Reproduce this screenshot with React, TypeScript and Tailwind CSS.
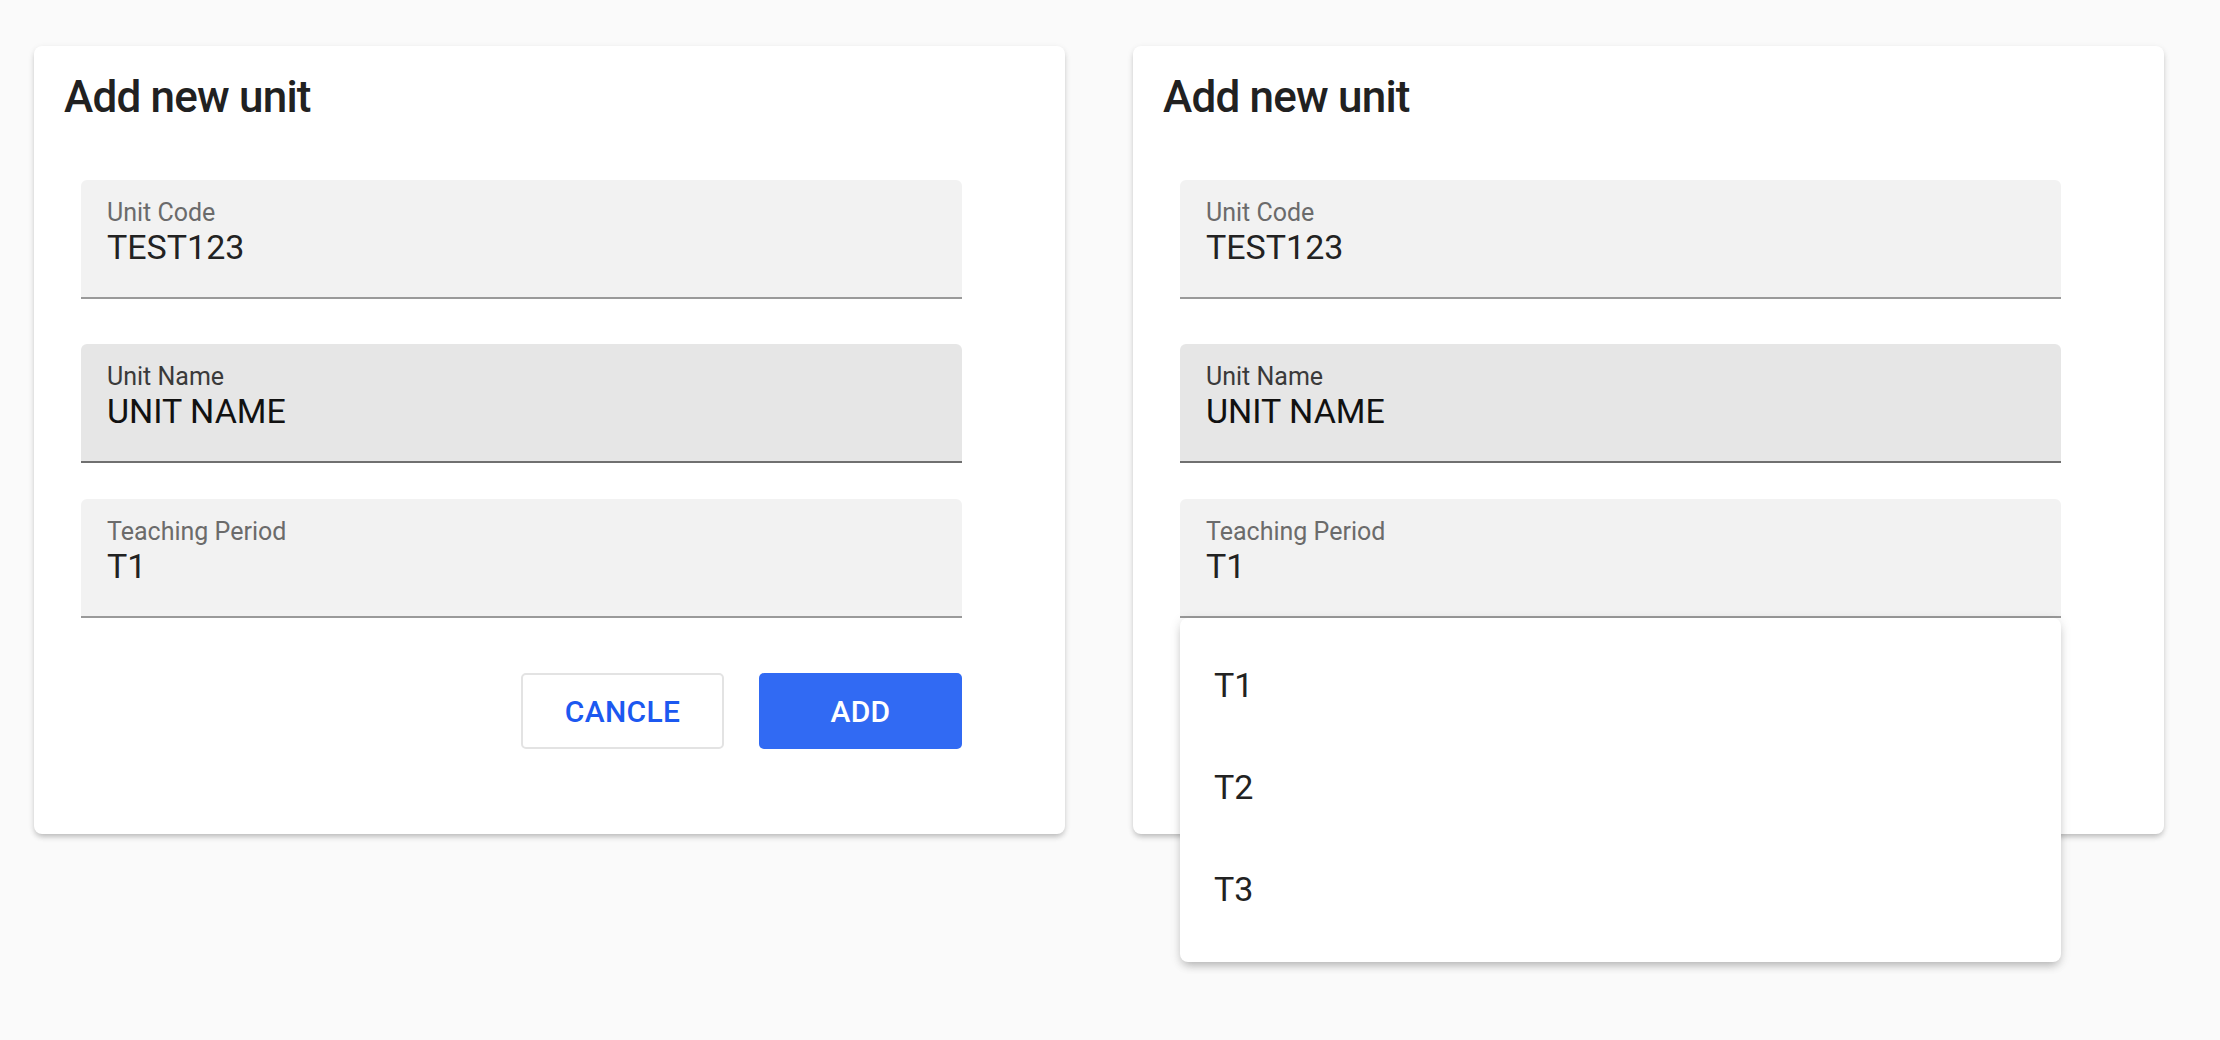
import React from "react";

type FieldProps = {
  label: string;
  value: string;
  hovered?: boolean;
  className?: string;
  children?: React.ReactNode;
};

function Field({ label, value, hovered, className, children }: FieldProps) {
  return (
    <div className={"relative w-[881px] " + (className ?? "")}>
      <div
        className={
          "rounded-t-[6px] border-b-2 pl-[26px] pt-[18px] pb-[29px] " +
          (hovered ? "bg-[#e6e6e6] border-[#707070]" : "bg-[#f2f2f2] border-[#9a9a9a]")
        }
      >
        <div
          className={
            "text-[25px] leading-[29px] " + (hovered ? "text-[#3a3a3a]" : "text-[#6b6b6b]")
          }
        >
          {label}
        </div>
        <div
          className={
            "text-[34px] leading-[41px] " + (hovered ? "text-[#111111]" : "text-[#222222]")
          }
        >
          {value}
        </div>
      </div>
      {children}
    </div>
  );
}

function Card({ withMenu }: { withMenu?: boolean }) {
  return (
    <div className="relative flex h-[788px] w-[1031px] flex-col rounded-[8px] bg-white px-[30px] pt-[25px] shadow-[0_4px_6px_-2px_rgba(0,0,0,0.22),0_2px_6px_0_rgba(0,0,0,0.1)]">
      <h2 className="text-[44px] font-medium leading-[52px] tracking-[-0.018em] text-[#212121]">
        Add new unit
      </h2>
      <div className="ml-[17px] mt-[57px] flex flex-col">
        <Field label="Unit Code" value="TEST123" />
        <Field label="Unit Name" value="UNIT NAME" hovered className="mt-[45px]" />
        <Field label="Teaching Period" value="T1" className="mt-[36px] z-10">
          {withMenu && (
            <div className="absolute left-0 right-0 top-full h-[344px] rounded-[8px] bg-white pt-[16px] pb-[22px] shadow-[0_6px_10px_-3px_rgba(0,0,0,0.22),0_2px_12px_0_rgba(0,0,0,0.12)]">
              {["T1", "T2", "T3"].map((t) => (
                <div
                  key={t}
                  className="flex h-[102px] items-center pl-[34px] text-[34px] text-[#222222]"
                >
                  {t}
                </div>
              ))}
            </div>
          )}
        </Field>
        <div className="mt-[55px] flex w-[881px] justify-end gap-[35px]">
          <button className="flex h-[76px] w-[203px] items-center justify-center rounded-[5px] border-2 border-[#e3e3e3] bg-white text-[30px] font-medium tracking-[0.01em] text-[#1c58f0]">
            CANCLE
          </button>
          <button className="flex h-[76px] w-[203px] items-center justify-center rounded-[5px] bg-[#316af3] text-[30px] font-medium tracking-[0.01em] text-white">
            ADD
          </button>
        </div>
      </div>
    </div>
  );
}

export default function App() {
  return (
    <div className="h-[1040px] w-[2220px] bg-[#fafafa] font-['Roboto',sans-serif]">
      <div className="flex gap-[68px] pl-[34px] pt-[46px]">
        <Card />
        <Card withMenu />
      </div>
    </div>
  );
}
